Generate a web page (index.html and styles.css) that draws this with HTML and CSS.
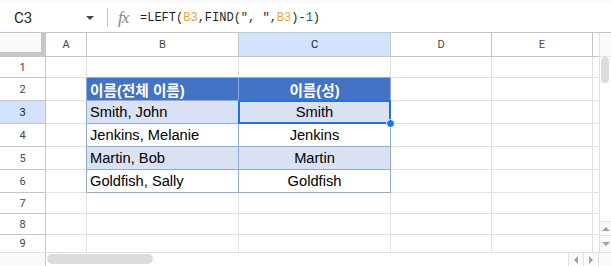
FILE: index.html
```html
<!DOCTYPE html>
<html lang="ko">
<head>
<meta charset="utf-8">
<title>Sheet</title>
<link rel="stylesheet" href="styles.css">
</head>
<body>
<div class="sheet">
  <div class="fbar">
    <div class="namebox">C3</div>
    <div class="caret"></div>
    <div class="fsep"></div>
    <div class="fx">fx</div>
    <div class="formula">=LEFT(<span class="ref">B3</span>,FIND(", ",<span class="ref">B3</span>)-<span class="num">1</span>)</div>
  </div>

  <div class="vscroll">
    <div class="vs-top"></div>
    <div class="vs-track"><div class="vs-thumb"></div></div>
    <div class="vs-btn vs-up"><span class="tri-up"></span></div>
    <div class="vs-btn vs-down"><span class="tri-down"></span></div>
  </div>

  <!-- header row -->
  <div class="corner"></div>
  <div class="c ch">A</div>
  <div class="c ch">B</div>
  <div class="c ch sel-h">C</div>
  <div class="c ch">D</div>
  <div class="c ch">E</div>
  <div class="c ch f"></div>

  <!-- row 1 -->
  <div class="c rh">1</div>
  <div class="c"></div>
  <div class="c tbb"></div>
  <div class="c tbb"></div>
  <div class="c"></div>
  <div class="c"></div>
  <div class="c f"></div>

  <!-- row 2 -->
  <div class="c rh">2</div>
  <div class="c tbr"></div>
  <div class="c tb th">이름(전체 이름)</div>
  <div class="c tb th ctr">이름(성)</div>
  <div class="c"></div>
  <div class="c"></div>
  <div class="c f"></div>

  <!-- row 3 -->
  <div class="c rh sel-h">3</div>
  <div class="c tbr"></div>
  <div class="c tb bd">Smith, John</div>
  <div class="c tb bd ctr active">Smith<span class="selbox"></span><span class="handle"></span></div>
  <div class="c"></div>
  <div class="c"></div>
  <div class="c f"></div>

  <!-- row 4 -->
  <div class="c rh">4</div>
  <div class="c tbr"></div>
  <div class="c tb">Jenkins, Melanie</div>
  <div class="c tb ctr">Jenkins</div>
  <div class="c"></div>
  <div class="c"></div>
  <div class="c f"></div>

  <!-- row 5 -->
  <div class="c rh">5</div>
  <div class="c tbr"></div>
  <div class="c tb bd">Martin, Bob</div>
  <div class="c tb bd ctr">Martin</div>
  <div class="c"></div>
  <div class="c"></div>
  <div class="c f"></div>

  <!-- row 6 -->
  <div class="c rh">6</div>
  <div class="c tbr"></div>
  <div class="c tb">Goldfish, Sally</div>
  <div class="c tb ctr">Goldfish</div>
  <div class="c"></div>
  <div class="c"></div>
  <div class="c f"></div>

  <!-- row 7 -->
  <div class="c rh">7</div>
  <div class="c"></div>
  <div class="c"></div>
  <div class="c"></div>
  <div class="c"></div>
  <div class="c"></div>
  <div class="c f"></div>

  <!-- row 8 -->
  <div class="c rh">8</div>
  <div class="c"></div>
  <div class="c"></div>
  <div class="c"></div>
  <div class="c"></div>
  <div class="c"></div>
  <div class="c f"></div>

  <!-- row 9 -->
  <div class="c rh last">9</div>
  <div class="c last"></div>
  <div class="c last"></div>
  <div class="c last"></div>
  <div class="c last"></div>
  <div class="c last"></div>
  <div class="c f last"></div>

  <div class="hscroll">
    <div class="hs-left"></div>
    <div class="hs-thumb"></div>
    <div class="hs-space"></div>
    <div class="hs-btn"><span class="tri-left"></span></div>
    <div class="hs-btn"><span class="tri-right"></span></div>
    <div class="hs-corner"></div>
  </div>
</div>
</body>
</html>
```

FILE: styles.css
```css
* { box-sizing: border-box; }

body {
  margin: 0;
  width: 611px;
  height: 266px;
  overflow: hidden;
  background: #fff;
  font-family: "Liberation Sans", Arial, "Noto Sans CJK KR", sans-serif;
}

.sheet {
  display: grid;
  grid-template-columns: 46px 41px 152px 152px 101px 101px 6px 12px;
  grid-template-rows: 33px 24px 21px 23px 23px 23px 23px 23px 21px 21px 17px 14px;
  width: 611px;
  height: 266px;
}

/* formula bar */
.fbar {
  grid-column: 1 / -1;
  display: flex;
  align-items: center;
  border-top: 3px solid #f8f9fa;
  border-bottom: 1px solid #c4c7c5;
  background: #fff;
}
.namebox {
  width: 86px;
  padding-left: 14px;
  font-family: Roboto, "Liberation Sans", sans-serif;
  font-size: 15px;
  color: #1f1f1f;
}
.caret {
  width: 0;
  height: 0;
  border-left: 4px solid transparent;
  border-right: 4px solid transparent;
  border-top: 4px solid #444746;
  margin-top: 1px;
}
.fsep {
  width: 1px;
  height: 19px;
  background: #c4c7c5;
  margin-left: 13px;
}
.fx {
  margin-left: 10px;
  width: 22px;
  font-family: "Liberation Serif", "DejaVu Serif", serif;
  font-style: italic;
  font-size: 17px;
  color: #80868b;
  letter-spacing: -1px;
}
.formula {
  font-family: "Liberation Mono", "DejaVu Sans Mono", monospace;
  font-size: 12px;
  color: #1f1f1f;
  white-space: pre;
}
.ref { color: #f4a424; }
.num { color: #1155cc; }

/* cells */
.c {
  border-right: 1px solid #e1e1e1;
  border-bottom: 1px solid #e1e1e1;
  display: flex;
  align-items: center;
  padding: 0 3px;
  font-size: 14.67px;
  color: #000;
  white-space: nowrap;
  overflow: hidden;
  position: relative;
}
.ctr { justify-content: center; }
.f { border-right: none; }
.last { border-bottom: none; }

.corner {
  background: #f8f9fa;
  border-right: 5px solid #c4c7c5;
  border-bottom: 5px solid #c4c7c5;
}
.ch {
  border-right-color: #c4c7c5;
  border-bottom-color: #c4c7c5;
  justify-content: center;
  font-family: Roboto, "Liberation Sans", sans-serif;
  font-size: 11px;
  color: #444746;
}
.ch.f { border-right: none; }
.rh {
  border-right-color: #c4c7c5;
  border-bottom-color: #c4c7c5;
  justify-content: center;
  font-family: Roboto, "Liberation Sans", sans-serif;
  font-size: 11px;
  color: #444746;
}
.sel-h {
  background: #d3e3fd;
  color: #041e49;
}

/* table */
.th {
  background: #4472c4;
  color: #fff;
  font-weight: bold;
  font-family: "Liberation Sans", "Noto Sans CJK KR", sans-serif;
}
.bd { background: #d9e1f2; }
.tb {
  border-right-color: #8eaadb;
  border-bottom-color: #8eaadb;
}
.tbr { border-right-color: #8eaadb; }
.tbb { border-bottom-color: #8eaadb; }

.active { overflow: visible; z-index: 2; }
.selbox {
  position: absolute;
  left: -1px;
  top: -1px;
  width: 153px;
  height: 24px;
  border: 2px solid #1a73e8;
  pointer-events: none;
}
.handle {
  position: absolute;
  right: -5px;
  bottom: -5px;
  width: 9px;
  height: 9px;
  border-radius: 50%;
  background: #1a73e8;
  border: 1px solid #fff;
}

/* vertical scrollbar */
.vscroll {
  grid-column: 8;
  grid-row: 2 / 12;
  border-left: 1px solid #e1e1e1;
  display: flex;
  flex-direction: column;
  background: #fff;
}
.vs-top {
  height: 24px;
  background: #f8f9fa;
  border-bottom: 1px solid #e1e1e1;
}
.vs-track { flex: 1; }
.vs-thumb {
  width: 8px;
  height: 26px;
  margin-left: 1px;
  border-radius: 4px;
  background: #dadce0;
}
.vs-btn {
  border-top: 1px solid #e1e1e1;
  display: flex;
  align-items: center;
  justify-content: center;
  background: #f8f9fa;
}
.vs-up { height: 14px; }
.vs-down { height: 17px; }
.tri-up, .tri-down, .tri-left, .tri-right {
  width: 0;
  height: 0;
}
.tri-up {
  border-left: 4px solid transparent;
  border-right: 4px solid transparent;
  border-bottom: 4px solid #a0a4a8;
}
.tri-down {
  border-left: 4px solid transparent;
  border-right: 4px solid transparent;
  border-top: 4px solid #a0a4a8;
}
.tri-left {
  border-top: 4px solid transparent;
  border-bottom: 4px solid transparent;
  border-right: 4px solid #a0a4a8;
}
.tri-right {
  border-top: 4px solid transparent;
  border-bottom: 4px solid transparent;
  border-left: 4px solid #a0a4a8;
}

/* horizontal scrollbar */
.hscroll {
  grid-column: 1 / -1;
  display: flex;
  align-items: stretch;
  border-top: 1px solid #e1e1e1;
}
.hs-left {
  width: 46px;
  background: #f8f9fa;
  border-right: 1px solid #c4c7c5;
}
.hs-thumb {
  width: 106px;
  height: 10px;
  margin: 1px 0 0 1px;
  border-radius: 5px;
  background: #dadce0;
}
.hs-space { flex: 1; }
.hs-btn {
  width: 15px;
  border-left: 1px solid #e1e1e1;
  display: flex;
  align-items: center;
  justify-content: center;
  background: #f8f9fa;
}
.hs-corner {
  width: 13px;
  border-left: 1px solid #e1e1e1;
  background: #f8f9fa;
}
```
